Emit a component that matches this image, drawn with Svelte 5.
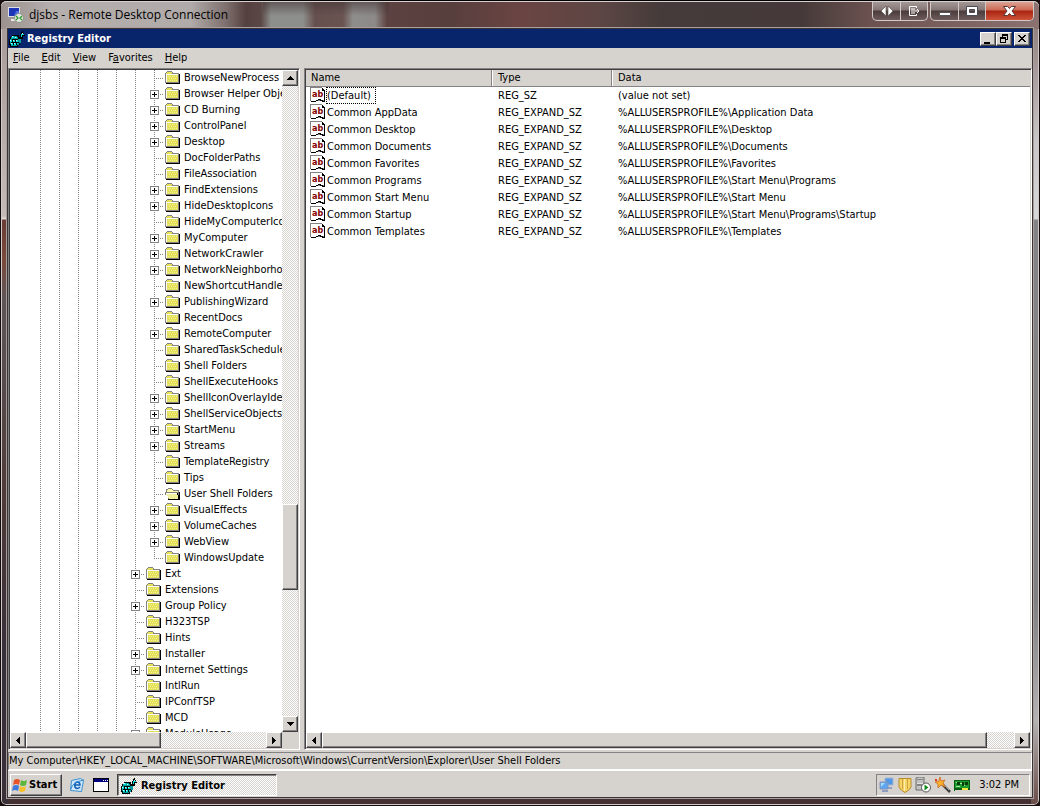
<script lang="ts">
  type Key = { name: string; depth: number; more?: boolean; open?: boolean; last?: boolean };

  const sub = (name: string, more = false): Key => ({ name, more, depth: 6 });
  const top = (name: string, more = false): Key => ({ name, more, depth: 5 });

  const keys: Key[] = [
    sub('BrowseNewProcess'),
    sub('Browser Helper Objects', true),
    sub('CD Burning', true),
    sub('ControlPanel', true),
    sub('Desktop', true),
    sub('DocFolderPaths'),
    sub('FileAssociation'),
    sub('FindExtensions', true),
    sub('HideDesktopIcons', true),
    sub('HideMyComputerIcons'),
    sub('MyComputer', true),
    sub('NetworkCrawler', true),
    sub('NetworkNeighborhood', true),
    sub('NewShortcutHandlers'),
    sub('PublishingWizard', true),
    sub('RecentDocs'),
    sub('RemoteComputer', true),
    sub('SharedTaskScheduler'),
    sub('Shell Folders'),
    sub('ShellExecuteHooks'),
    sub('ShellIconOverlayIdentifiers', true),
    sub('ShellServiceObjects', true),
    sub('StartMenu', true),
    sub('Streams', true),
    sub('TemplateRegistry'),
    sub('Tips'),
    { ...sub('User Shell Folders'), open: true },
    sub('VisualEffects', true),
    sub('VolumeCaches', true),
    sub('WebView', true),
    { ...sub('WindowsUpdate'), last: true },
    top('Ext', true),
    top('Extensions'),
    top('Group Policy', true),
    top('H323TSP'),
    top('Hints'),
    top('Installer', true),
    top('Internet Settings', true),
    top('IntlRun'),
    top('IPConfTSP'),
    top('MCD'),
    top('ModuleUsage', true),
  ];

  const root = '%ALLUSERSPROFILE%\\';
  const values = [
    { name: '(Default)', type: 'REG_SZ', data: '(value not set)' },
    { name: 'Common AppData', type: 'REG_EXPAND_SZ', data: root + 'Application Data' },
    { name: 'Common Desktop', type: 'REG_EXPAND_SZ', data: root + 'Desktop' },
    { name: 'Common Documents', type: 'REG_EXPAND_SZ', data: root + 'Documents' },
    { name: 'Common Favorites', type: 'REG_EXPAND_SZ', data: root + 'Favorites' },
    { name: 'Common Programs', type: 'REG_EXPAND_SZ', data: root + 'Start Menu\\Programs' },
    { name: 'Common Start Menu', type: 'REG_EXPAND_SZ', data: root + 'Start Menu' },
    { name: 'Common Startup', type: 'REG_EXPAND_SZ', data: root + 'Start Menu\\Programs\\Startup' },
    { name: 'Common Templates', type: 'REG_EXPAND_SZ', data: root + 'Templates' },
  ];

  const menus = [
    ['', 'F', 'ile'],
    ['', 'E', 'dit'],
    ['', 'V', 'iew'],
    ['F', 'a', 'vorites'],
    ['', 'H', 'elp'],
  ];

  const path =
    'My Computer\\HKEY_LOCAL_MACHINE\\SOFTWARE\\Microsoft\\Windows\\CurrentVersion\\Explorer\\User Shell Folders';

  const arrows = {
    up: 'M4 0h1v1h1v1h1v1h1v1H1V3h1V2h1V1h1z',
    down: 'M1 0h7v1H7v1H6v1H5v1H4V3H3V2H2V1H1z',
    left: 'M4 0h1v7H4V6H3V5H2V4H1V3h1V2h1V1h1z',
    right: 'M1 0h1v1h1v1h1v1h1v1H4v1H3v1H2v1H1z',
  };
</script>

{#snippet scrollbar(dir: 'v' | 'h', before: number, thumb: number, after: number)}
  <div class="scroll {dir}">
    <button class="arrow" aria-label={dir === 'v' ? 'Scroll up' : 'Scroll left'}>
      <svg width={dir === 'v' ? 9 : 6} height={dir === 'v' ? 4 : 7}><path d={dir === 'v' ? arrows.up : arrows.left} /></svg>
    </button>
    <span style="flex: {before} 0 0"></span>
    <span class="thumb" style="flex: {thumb} 0 0"></span>
    <span style="flex: {after} 0 0"></span>
    <button class="arrow" aria-label={dir === 'v' ? 'Scroll down' : 'Scroll right'}>
      <svg width={dir === 'v' ? 9 : 6} height={dir === 'v' ? 4 : 7}><path d={dir === 'v' ? arrows.down : arrows.right} /></svg>
    </button>
  </div>
{/snippet}

{#snippet regIcon()}
  <svg class="px" width="16" height="16" viewBox="0 0 16 16">
    <path fill="#000" d="M3 4h6v2h2V3h1V1h1V0h1v2h1v2h1v1h-2v3h-2v4h-1v2h-2v2H1v-2H0V8h1V6h2z" />
    <path fill="#009c9c" d="M3 5h5v1h2v2h2v4h-2v2H8v1H2v-2H1V8h1V6h1z" />
    <path fill="#00dede" d="M3 5h2v2H3zM6 6h2v1H6zM1 9h2v2H1zM4 9h2v2H4zM7 9h2v2H7zM2 12h2v2H2zM5 12h2v2H5zM8 12h1v1H8zM12 3h1v3h-1zM13 3h2v1h-2z" />
    <path fill="#c6ffff" d="M3 5h1v1H3zM6 6h1v1H6zM1 9h1v1H1zM4 9h1v1H4zM7 9h1v1H7zM2 12h1v1H2zM5 12h1v1H5zM13 2h1v1h-1z" />
    <path fill="#000" d="M3 8h6v1H3zM2 11h8v1H2zM6 9h1v2H6zM3 9h1v2H3zM4 12h1v2H4zM7 12h1v2H7zM9 4h1v4H9z" />
  </svg>
{/snippet}

{#snippet folder(open: boolean)}
  {#if open}
    <svg class="px icon" width="16" height="16" viewBox="0 0 16 16">
      <path fill="#808080" d="M3 2h4v1h1v1h6v2h1v8H3V9H0V6h1V3h2z" />
      <path fill="#ffffa8" d="M3 3h4v1h1v1h5v1H2V4h1z" />
      <path fill="#fff" d="M1 7h11v1H1z" />
      <path fill="#efef9c" d="M1 8h11v1h1v2h1v2H4v-1H3v-2H2V9H1z" />
      <path fill="#000" d="M14 6h1v8h-1zM3 13h12v1H3zM12 7h1v2h-1zM13 9h1v4h-1z" />
    </svg>
  {:else}
    <svg class="px icon" width="16" height="16" viewBox="0 0 16 16">
      <path fill="#848284" d="M2 1h5v1h1v1h6v10H0V3h1V2h1z" />
      <path fill="#e7e35a" d="M2 2h5v1H2z" />
      <path fill="#fff" d="M1 4h12v1H1zM1 4h1v8H1z" />
      <path fill="#e4e158" d="M1 3h6v1H1zM2 5h11v7H2z" />
      <path fill="#f3f09a" d="M3 6h1v1H3zM5 6h1v1H5zM7 6h1v1H7zM9 6h1v1H9zM11 6h1v1h-1zM4 8h1v1H4zM6 8h1v1H6zM8 8h1v1H8zM10 8h1v1h-1zM3 10h1v1H3zM5 10h1v1H5zM7 10h1v1H7zM9 10h1v1H9zM11 10h1v1h-1z" />
      <path fill="#000" d="M14 4h1v10H1v-1h13z" />
    </svg>
  {/if}
{/snippet}

<div class="rdp">
  <header class="glass">
    <svg class="rdp-icon" width="16" height="16" viewBox="0 0 16 16">
      <rect x="0" y="0" width="12" height="10" fill="#d9dde4" />
      <rect x="1" y="1" width="10" height="8" fill="#1d35b4" />
      <path d="M6 9l2-5h3v5z" fill="#4b6be0" />
      <path d="M3 12h6v2H3z" fill="#e8e8e8" />
      <circle cx="11" cy="11" r="4.500" fill="#e4e8e0" stroke="#8c9488" />
      <path d="M8 9l2 2-2 2M14 9l-2 2 2 2" fill="none" stroke="#2f9a2c" stroke-width="1.300" />
    </svg>
    <span class="host">djsbs - Remote Desktop Connection</span>
    <div class="aero">
      <button aria-label="Stretch"><svg width="12" height="10" viewBox="0 0 12 10"><path d="M5 0v10L0 5zM7 0v10l5-5z" fill="#fff" stroke="#4a4444" stroke-width=".6" /></svg></button>
      <button aria-label="Send"><svg width="12" height="12" viewBox="0 0 12 12" fill="none" stroke="#fff"><path d="M8.500 3V1.500h-7v9h7V9M3 4h4M3 6h8M3 8h4M9 4l2 2-2 2" /></svg></button>
    </div>
    <div class="aero main">
      <button aria-label="Minimize"><svg class="low" width="12" height="5" viewBox="0 0 12 5"><path d="M.5.5h11v3H.5z" fill="#fff" stroke="#555" /></svg></button>
      <button aria-label="Maximize"><svg width="12" height="10" viewBox="0 0 12 10"><path fill-rule="evenodd" d="M.5.5h11v9H.5zM3.500 3.500v3h5v-3z" fill="#fff" stroke="#4b4b55" /></svg></button>
      <button class="close" aria-label="Close"><svg width="13" height="10" viewBox="0 0 13 10"><path d="M.5.5h4l2 2 2-2h4L9 5l3.500 4.500h-4l-2-2-2 2h-4L4 5z" fill="#fff" stroke="#5c3434" /></svg></button>
    </div>
  </header>

  <div class="desktop">
    <div class="caption">
      {@render regIcon()}
      <h1>Registry Editor</h1>
      <button aria-label="Minimize window"><svg class="px" width="10" height="10"><path d="M1 8h6v2H1z" /></svg></button>
      <button aria-label="Restore window"><svg class="px" width="10" height="10"><path fill-rule="evenodd" d="M3 0h6v6H7v3H1V3h2zM4 2v1h3v2h1V2zM2 5v3h4V5z" /></svg></button>
      <button class="x" aria-label="Close window"><svg class="px" width="10" height="10"><path d="M1 1h2v1h1v1h2V2h1V1h2v1H8v1H7v1H6v1h1v1h1v1h1v1H7V7H6V6H4v1H3v1H1V7h1V6h1V5h1V4H3V3H2V2H1z" /></svg></button>
    </div>

    <nav class="menu">
      {#each menus as [pre, hot, rest]}
        <button>{pre}<u>{hot}</u>{rest}</button>
      {/each}
    </nav>

    <main>
      <section class="pane tree">
        <div class="view">
          <ul>
            {#each keys as key}
              <li>
                {#each Array(key.depth) as _}
                  <span class="guide"></span>
                {/each}
                <span class="branch" class:last={key.last}>
                  {#if key.more}
                    <button class="plus" aria-label="Expand {key.name}"></button>
                  {/if}
                </span>
                {@render folder(!!key.open)}
                <span class="label">{key.name}</span>
              </li>
            {/each}
          </ul>
          {@render scrollbar('v', 419, 85, 126)}
        </div>
        <div class="foot">
          {@render scrollbar('h', 0, 134, 106)}
          <span class="corner"></span>
        </div>
      </section>

      <section class="pane list">
        <div class="view">
          <table>
            <thead>
              <tr><th class="name">Name</th><th class="type">Type</th><th>Data</th></tr>
            </thead>
            <tbody>
              {#each values as value, i}
                <tr>
                  <td class="name">
                    <div class="cell">
                      <svg class="px" width="16" height="16" viewBox="0 0 16 16">
                        <path fill="#848284" d="M0 0h12v1h1v1h1v1h1v10h-1v1H0z" />
                        <path fill="#fff" d="M1 1h11v2h2v10h-3v-1H8v1H6v1H1z" />
                        <path fill="#000" d="M12 1h1v1h1v1h1v12h-3v-1h-2v-1H8v1H6v1H1v-1h5v-1h2v-1h3v1h2v1h1V4h-2z" />
                        <text x="2" y="10">ab</text>
                      </svg>
                      <span class="label" class:focus={i === 0}>{value.name}</span>
                    </div>
                  </td>
                  <td>{value.type}</td>
                  <td>{value.data}</td>
                </tr>
              {/each}
            </tbody>
          </table>
        </div>
        {@render scrollbar('h', 0, 664, 27)}
      </section>
    </main>

    <div class="status">{path}</div>

    <footer>
      <button class="start">
        <svg width="16" height="16" viewBox="0 0 16 16">
          <path d="M2 3q3-2 6 0L7 8Q4 6 1 8z" fill="#e8542a" />
          <path d="M9 3q3 2 6 0l-1 5q-3 2-6 0z" fill="#5db53a" />
          <path d="M1 9q3-2 6 0l-1 5q-3-2-6 0z" fill="#3f78dc" />
          <path d="M8 9q3 2 6 0l-1 5q-3 2-6 0z" fill="#f7c02c" />
        </svg>
        Start
      </button>
      <button class="quick" aria-label="Internet Explorer">
        <svg width="16" height="16" viewBox="0 0 16 16">
          <path d="M2.500 3.500l9-2 3 2-2 11-11-1z" fill="#cfe8fa" stroke="#3d8fd0" />
          <path d="M11 10q-3 3-5 0-1-4 2-5 3 0 3 3H6" fill="none" stroke="#1462b8" stroke-width="1.600" />
          <path d="M2 12Q3 5 15 3" fill="none" stroke="#2f8ad6" />
        </svg>
      </button>
      <button class="quick" aria-label="Show desktop">
        <svg class="px" width="16" height="14" viewBox="0 0 16 14">
          <path fill="#000" d="M0 0h16v14H0z" />
          <path fill="#fff" d="M1 1h14v12H1z" />
          <path fill="#000080" d="M1 1h14v3H1z" />
          <path fill="#fff" d="M10 2h1v1h-1zM12 2h1v1h-1zM14 2h1v1h-1z" />
        </svg>
      </button>
      <button class="task">{@render regIcon()} Registry Editor</button>

      <div class="tray">
        <svg width="16" height="16" viewBox="0 0 16 16">
          <path d="M6 1h8v7H6z" fill="#4f97ea" stroke="#a8b4cc" />
          <path d="M8 10h5v2H8z" fill="#93a1c4" />
          <path d="M1 5h8v7H1z" fill="#5aa6f2" stroke="#8593b4" />
          <path d="M2 6h4L2 10z" fill="#a9dafc" />
          <path d="M3 13h6v2H3z" fill="#8e9cc0" />
        </svg>
        <svg width="14" height="16" viewBox="0 0 14 16">
          <path d="M1 1.500h12V10q0 2-6 5.500Q1 12 1 10z" fill="#f6d568" stroke="#b98a2c" />
          <path d="M4.500 2v10M9.500 2v10" stroke="#cfa13a" />
          <path d="M6 2h1v12H6z" fill="#fff0b0" />
        </svg>
        <svg width="16" height="16" viewBox="0 0 16 16">
          <path d="M1 1l2-1h6v13H1z" fill="#c4c4c4" stroke="#6c6c6c" />
          <path d="M2 3h6M2 5h6M2 8h6" stroke="#444" />
          <path d="M2 4h6M2 6h6" stroke="#fff" />
          <circle cx="11" cy="10.500" r="4.500" fill="#fff" stroke="#555" />
          <path d="M9.500 7.500v6l4-3z" fill="#128a1a" />
        </svg>
        <svg width="17" height="16" viewBox="0 0 17 16">
          <path d="M7 6l9 9" stroke="#3b3b3b" stroke-width="2.500" />
          <path d="M8 6l7 7" stroke="#a0a0a0" />
          <path d="M6 0l1 4 4-1-2 3 2 4-4-2-3 3V7L1 5l4-1z" fill="#f9b22c" stroke="#cc5a14" stroke-width=".7" />
          <path d="M1 2h2v2H1z" fill="#e03c20" />
        </svg>
        <svg class="px" width="17" height="14" viewBox="0 0 17 14">
          <path fill="#0a5c14" d="M0 2h16v10H1v1H0z" />
          <path fill="#1c9c2c" d="M1 3h14v7H1z" />
          <path fill="#063c0a" d="M3 4h3v3H3zM8 4h2v4H8zM11 4h3v3h-3z" />
          <path fill="#a8e8a0" d="M2 4h1v1H2zM6 5h2v1H6zM2 8h4v1H2zM10 7h1v1h-1z" />
          <path fill="#f4e83c" d="M8 10h6v2H8z" />
        </svg>
        <time>3:02 PM</time>
      </div>
    </footer>
  </div>
</div>

<style>
  :global(body) {
    background: #1a0f0e;
  }

  .rdp {
    --face: #d6d3ce;
    --dither: repeating-conic-gradient(#fff 0 25%, var(--face) 0 50%) 0 0 / 2px 2px;
    display: flex;
    flex-direction: column;
    height: 100vh;
    box-sizing: border-box;
    padding: 0 7px 8px;
    border: 1px solid #120c0c;
    border-top-color: #000;
    border-radius: 6px;
    font: 11px/16px 'DejaVu Sans Condensed', 'DejaVu Sans', sans-serif;
    color: #000;
    box-shadow: inset 0 0 0 1px #cfc8c6;
    background:
      linear-gradient(#a49896, #c4bab8 215px, #e4dcda 218px, #6b3c35 219px, #7a4a3c 260px, #5c5658 300px, #4e3a38 500px, #35303a 660px, #3a3038) 0 0 / 8px 100% no-repeat,
      linear-gradient(#857270, #c8c6c6 140px, #d8d8d8 218px, #848484 219px, #808080 600px, #b4b2b2 720px, #6a4c48) 100% 0 / 8px 100% no-repeat,
      #443032;
  }

  button {
    margin: 0;
    padding: 0;
    border: 0;
    background: none;
    color: inherit;
    font: inherit;
  }

  svg {
    display: block;
    flex: none;
  }

  .px {
    shape-rendering: crispEdges;
  }

  /* outer glass frame */
  .glass {
    display: flex;
    flex: none;
    align-items: flex-start;
    height: 28px;
    box-sizing: border-box;
    margin: 0 -7px;
    padding: 0 5px 0 7px;
    border-top: 1px solid #d8d0ce;
    border-radius: 6px 6px 0 0;
    background:
      linear-gradient(rgb(70 56 55 / 60%), transparent 14px) 262px 0 / 126px 100% no-repeat,
      linear-gradient(
        90deg,
        #9c918f 0,
        #b4aeac 50px,
        #b0aaa8 190px,
        #7c6e6c 226px,
        #54403f 245px,
        #5a4847 260px,
        #8d8f8c 270px,
        #8d8f8c 302px,
        #66504e 314px,
        #6a5452 342px,
        #8f8e8c 352px,
        #8c8a88 374px,
        #5c4240 386px,
        #573f3e 450px,
        #6a4442 520px,
        #5c4644 600px,
        #453b3a 660px,
        #453a39 800px,
        #6b5250 870px,
        #8b7270 100%
      );
  }

  .rdp-icon {
    margin-top: 5px;
  }

  .host {
    flex: 1;
    padding: 5px 0 0 5px;
    font: 12px/16px 'Open Sans', 'Noto Sans', sans-serif;
    white-space: nowrap;
  }

  .aero {
    display: flex;
    height: 18px;
    margin-left: 2px;
    border: 1px solid #d2cac8;
    border-top: 0;
    border-radius: 0 0 5px 5px;
    background: linear-gradient(#a39896, #857674 8px, #4a3c3b 9px, #6e5c5b);
    overflow: hidden;
  }

  .aero button {
    display: grid;
    place-items: center;
    width: 27px;
  }

  .aero .low {
    margin-top: 6px;
  }

  .aero button + button {
    border-left: 1px solid #d2cac8;
  }

  .aero .close {
    width: 48px;
    background: linear-gradient(#dca294, #cc6a54 8px, #a82410 9px, #d0533a);
  }

  /* remote desktop */
  .desktop {
    display: flex;
    flex: 1;
    flex-direction: column;
    min-height: 0;
    background: var(--face);
    box-shadow: 0 0 0 1px #3c3434, 0 0 0 2px #a8a09e;
  }

  .caption {
    display: flex;
    flex: none;
    align-items: center;
    height: 19px;
    padding: 0 2px 0 1px;
    background: #08246b;
    color: #fff;
  }

  .caption h1 {
    flex: 1;
    margin: 0 0 0 2px;
    font-size: 11px;
    line-height: 16px;
  }

  .caption button,
  .arrow,
  .thumb,
  .start {
    display: grid;
    place-items: center;
    box-sizing: border-box;
    background: var(--face);
    border: 1px solid;
    border-color: #fff #404040 #404040 #fff;
    box-shadow: inset -1px -1px #848284;
    color: #000;
  }

  .caption button {
    width: 16px;
    height: 14px;
  }

  .caption .x {
    margin-left: 2px;
  }

  .menu {
    display: flex;
    flex: none;
    height: 20px;
    gap: 12px;
    padding: 0 5px;
    line-height: 20px;
  }

  main {
    display: flex;
    flex: 1;
    gap: 4px;
    min-height: 0;
  }

  .pane {
    display: flex;
    flex-direction: column;
    box-sizing: border-box;
    border: 1px solid;
    border-color: #848284 #fff #fff #848284;
    padding: 1px;
    background: #fff;
    box-shadow: inset 1px 1px #404040, inset -1px -1px var(--face);
  }

  .tree {
    width: 292px;
    flex: none;
  }

  .list {
    flex: 1;
    min-width: 0;
  }

  .view {
    display: flex;
    flex: 1;
    min-height: 0;
    overflow: hidden;
  }

  .foot {
    display: flex;
  }

  .corner {
    width: 16px;
    background: var(--face);
  }

  .scroll {
    display: flex;
    flex: none;
    background: var(--dither);
  }

  .scroll.v {
    flex-direction: column;
    width: 16px;
  }

  .foot .scroll {
    flex: 1;
  }

  .arrow {
    width: 16px;
    height: 16px;
    flex: none;
  }

  ul {
    flex: 1;
    min-width: 0;
    margin: 0;
    padding: 0 0 0 21px;
    overflow: hidden;
    list-style: none;
  }

  li {
    display: flex;
    height: 16px;
    white-space: nowrap;
  }

  .guide,
  .branch {
    flex: none;
    width: 19px;
    background: repeating-linear-gradient(#848284 0 1px, transparent 1px 2px) 9px 0 / 1px 100% no-repeat;
  }

  .branch {
    display: grid;
    place-items: center;
    box-sizing: border-box;
    padding-top: 1px;
    background:
      repeating-linear-gradient(#848284 0 1px, transparent 1px 2px) 9px 0 / 1px 100% no-repeat,
      repeating-linear-gradient(90deg, #848284 0 1px, transparent 1px 2px) 9px 8px / 10px 1px no-repeat;
  }

  .branch.last {
    background-size: 1px 9px, 10px 1px;
  }

  .plus {
    width: 9px;
    height: 9px;
    border: 1px solid #848284;
    background:
      linear-gradient(#000, #000) 1px 3px / 5px 1px no-repeat,
      linear-gradient(#000, #000) 3px 1px / 1px 5px no-repeat,
      #fff;
  }

  .icon {
    margin: 0 3px 0 1px;
  }

  table {
    width: 100%;
    align-self: flex-start;
    table-layout: fixed;
    border-collapse: separate;
    border-spacing: 0;
  }

  th {
    height: 16px;
    padding: 0 0 0 5px;
    border-right: 1px solid #848284;
    border-bottom: 1px solid #848284;
    background: var(--face);
    box-shadow: inset 1px 0 #fff;
    font-weight: normal;
    line-height: 16px;
    text-align: left;
  }

  th:first-child {
    box-shadow: none;
  }

  th:last-child {
    border-right: 0;
  }

  th.name {
    width: 180px;
  }

  th.type {
    width: 113px;
  }

  th + th {
    padding-left: 6px;
  }

  td {
    height: 17px;
    padding: 0 0 0 6px;
    line-height: 17px;
    white-space: nowrap;
  }

  td.name {
    padding-left: 4px;
  }

  .cell {
    display: flex;
  }

  .cell .label {
    padding: 0 1px;
    line-height: 17px;
  }

  .cell .focus {
    padding: 0 4px 0 0;
    border: 1px dotted #000;
    line-height: 15px;
  }

  .cell text {
    fill: #840000;
    font: bold 9px 'DejaVu Sans Condensed', sans-serif;
  }

  .status {
    flex: none;
    height: 16px;
    margin-top: 2px;
    border: 1px solid;
    border-color: #848284 #fff #fff #848284;
    white-space: nowrap;
    overflow: hidden;
  }

  /* taskbar */
  footer {
    display: flex;
    flex: none;
    height: 27px;
    box-sizing: border-box;
    padding: 3px 2px 1px;
    border-top: 1px solid #fff;
  }

  .start {
    display: flex;
    gap: 1px;
    width: 52px;
    padding: 0 1px;
    font-weight: bold;
  }

  .quick {
    display: grid;
    place-items: center;
    width: 24px;
  }

  .start + .quick {
    margin-left: 3px;
  }

  .task {
    display: flex;
    align-items: center;
    gap: 4px;
    width: 160px;
    box-sizing: border-box;
    margin-left: 4px;
    padding: 1px 3px 0;
    border: 1px solid;
    border-color: #404040 #fff #fff #404040;
    background: var(--dither);
    box-shadow: inset 1px 1px #848284;
    font-weight: bold;
  }

  .tray {
    display: flex;
    align-items: center;
    gap: 3px;
    margin-left: auto;
    padding: 0 10px 0 2px;
    border: 1px solid;
    border-color: #848284 #fff #fff #848284;
  }

  time {
    margin-left: 5px;
  }
</style>
